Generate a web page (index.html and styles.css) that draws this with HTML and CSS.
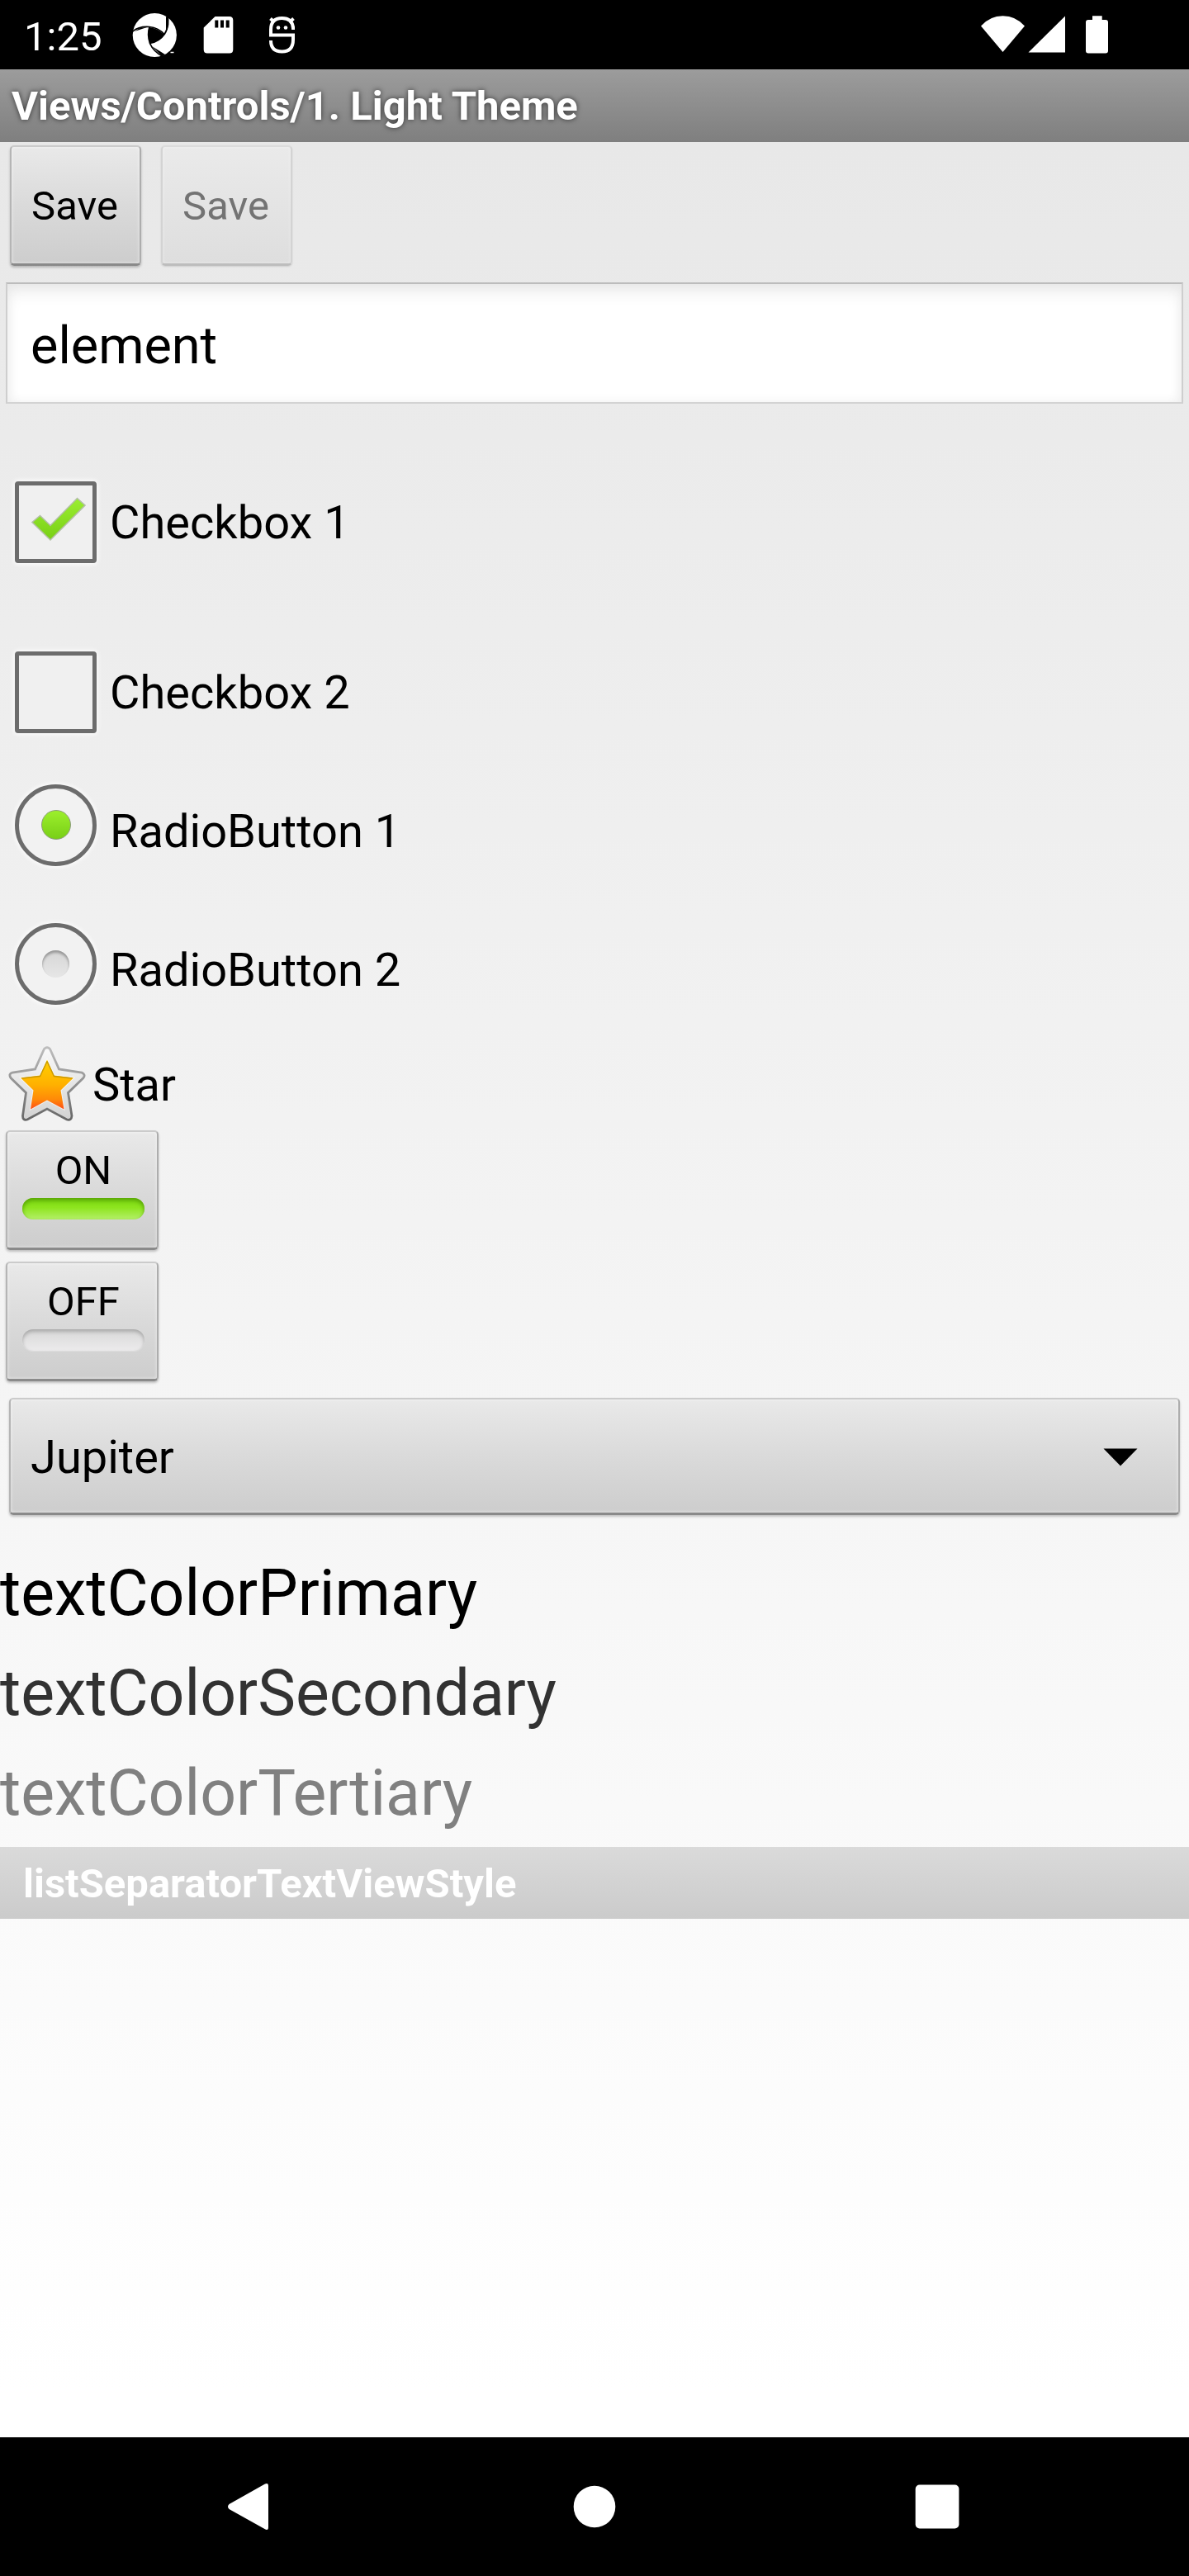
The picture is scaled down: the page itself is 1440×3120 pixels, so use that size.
FILE: index.html
```html
<!DOCTYPE html>
<html lang="en">
<head>
<meta charset="utf-8">
<title>Views/Controls/1. Light Theme</title>
<link rel="stylesheet" href="styles.css">
</head>
<body>
<div class="screen">
  <header class="status">
    <span class="clock">1:25</span>
    <svg class="status-left" width="200" height="84" viewBox="160 0 200 84">
      <circle cx="187.3" cy="42.5" r="26.6" fill="#fff"/>
      <path d="M180.500 33 Q191 34 199 42 Q193 50 181.500 52.500 Q178.500 42 180.500 33Z" fill="#000"/>
      <g fill="none" stroke="#000" stroke-width="1.700">
        <path d="M160 38.500 Q168 31.500 181 32.500 Q192 33.500 199.500 42"/>
        <path d="M202.500 18 Q206 30 199.500 41 Q193 50.500 181.500 52.500"/>
        <path d="M198 69 Q186 63 181.500 52.500 Q178 42 181 32.500"/>
      </g>
      <path d="M201 20 L203.500 21 L204 31 L201 40Z M163 38 L178 33 L170 33.500Z M184 56 L196 68 L200 66Z" fill="#000"/>
      <path d="M206.500 63.500h4" stroke="#fff" stroke-width="1.500"/>
      <path fill="#fff" fill-rule="evenodd" d="M260.500 20H278Q282.300 20 282.300 24.500V60Q282.300 64.500 278 64.500H251Q246.700 64.500 246.700 60V33.500ZM260.300 24.500V33.500H264.300V24.500ZM267 24.500V33.500H271V24.500ZM273.700 24.500V33.500H277.700V24.500Z"/>
      <g fill="none" stroke="#fff" stroke-width="4">
        <path d="M357 34H355Q354 22 341.500 22Q328 22 328 36V42.500H355V48Q355 62.500 341.500 62.500Q328 62.500 328 49"/>
        <path d="M327.500 22.500L332.500 27M355.500 22.500L350.500 27"/>
      </g>
      <circle cx="337" cy="33.500" r="2.300" fill="#fff"/><circle cx="346" cy="33.500" r="2.300" fill="#fff"/>
    </svg>
    <svg class="status-right" width="160" height="84" viewBox="1185 0 160 84" fill="#fff">
      <path d="M1188 31.500Q1199 19.300 1214.500 19.300T1241 31.500L1214.500 63Z"/>
      <path d="M1290 19.500V63.500H1245.500Z"/>
      <path d="M1323 19.300H1334.700V24H1339Q1342 24 1342 27V61.500Q1342 64.500 1339 64.500H1318Q1315 64.500 1315 61.500V27Q1315 24 1318 24H1323Z"/>
    </svg>
  </header>
  <div class="titlebar">Views/Controls/1. Light Theme</div>
  <main class="content">
    <div class="buttons">
      <button class="btn save">Save</button>
      <button class="btn save disabled">Save</button>
    </div>
    <div class="edit">element</div>
    <div class="row check">
      <span class="box"><svg width="89" height="89" viewBox="0 0 89 89">
        <defs><linearGradient id="tick" x1="0" y1="0" x2="0" y2="1"><stop offset="0" stop-color="#9bee31"/><stop offset="1" stop-color="#79cf15"/></linearGradient></defs>
        <path d="M16 44.500L25.500 36.500L38 48.500L70.500 15.500L80 24L38 66Z" fill="url(#tick)" stroke="#b3bfa6" stroke-width="1.600"/>
      </svg></span>
      <span>Checkbox 1</span>
    </div>
    <div class="row check second"><span class="box"></span><span>Checkbox 2</span></div>
    <div class="row radio"><span class="ring"><span class="dot on"></span></span><span>RadioButton 1</span></div>
    <div class="row radio"><span class="ring"><span class="dot"></span></span><span>RadioButton 2</span></div>
    <div class="row star">
      <svg width="96" height="96" viewBox="9 1265.500 96 96">
        <defs>
          <linearGradient id="rim" x1="0" y1="0" x2="0" y2="1"><stop offset="0" stop-color="#bdbdbd"/><stop offset="1" stop-color="#666"/></linearGradient>
          <linearGradient id="metal" x1="0" y1="0" x2="0" y2="1"><stop offset="0" stop-color="#fafafa"/><stop offset="1" stop-color="#d2d2d2"/></linearGradient>
          <linearGradient id="gold" x1="0" y1="0" x2="0" y2="1"><stop offset="0" stop-color="#ffd000"/><stop offset=".5" stop-color="#ffb100"/><stop offset=".8" stop-color="#ff8a08"/><stop offset="1" stop-color="#ff4d18"/></linearGradient>
        </defs>
        <path d="M53.500 1270Q57 1266.500 60.500 1270L71.500 1294.500L99 1298.500Q104 1301 101 1305L82.500 1323L87 1351Q86.500 1357 81 1355.500L57 1342.500L33 1355.500Q27.500 1357 27.500 1351L31.500 1323L13 1305Q10 1300 15 1298.500L42.500 1294.500Z" fill="url(#metal)" stroke="url(#rim)" stroke-width="2.800"/>
        <path d="M57 1283L65.500 1302L89 1305L73.500 1320L77.500 1343L57 1332L37 1343L40.500 1320L25 1305L48.500 1302Z" fill="url(#gold)" stroke="#fff" stroke-opacity=".55" stroke-width="2" paint-order="stroke"/>
        <path d="M57 1285L48.500 1303L26.500 1305.500M57 1285L65.500 1303L87.500 1305.500" fill="none" stroke="#b88b00" stroke-width="1.500" opacity=".75"/>
      </svg>
      <span>Star</span>
    </div>
    <button class="btn toggle"><span>ON</span><span class="led lit"></span></button>
    <button class="btn toggle"><span>OFF</span><span class="led"></span></button>
    <div class="btn spinner"><span>Jupiter</span>
      <svg width="44" height="24" viewBox="0 0 44 24"><path d="M1.500 1.500H42.500L22 22.500Z"/></svg>
    </div>
    <p class="sample primary">textColorPrimary</p>
    <p class="sample secondary">textColorSecondary</p>
    <p class="sample tertiary">textColorTertiary</p>
    <div class="separator">listSeparatorTextViewStyle</div>
  </main>
  <nav class="navbar">
    <svg width="1440" height="168" viewBox="0 2952 1440 168" fill="#fff">
      <path d="M277.500 3033L320.500 3008.800Q325 3006.500 325 3011V3061Q325 3065.500 320.500 3063L277.500 3039Q274.500 3036 277.500 3033Z"/>
      <circle cx="720" cy="3036" r="25.300"/>
      <rect x="1108.700" y="3009.500" width="52.700" height="53" rx="5"/>
    </svg>
  </nav>
</div>
</body>
</html>
```
FILE: styles.css
```css
* { box-sizing: border-box; }
body { margin: 0; font-family: Roboto, "Liberation Sans", sans-serif; color: #000; }
.screen { width: 1440px; height: 3120px; display: flex; flex-direction: column; overflow: hidden; }

.status { flex: none; height: 84px; display: flex; align-items: center; background: #000; color: #fff; padding: 0 95px 0 29px; font-size: 49px; }
.clock { width: 131px; padding-top: 5px; line-height: 58px; }
.status-right { margin-left: auto; }
.titlebar { flex: none; height: 88px; padding-left: 14px; line-height: 90px; font-size: 49px; font-weight: 700; color: #fff; background: linear-gradient(#9c9c9c, #7f7f7f); text-shadow: 0 0 6px rgba(0, 0, 0, .65); white-space: nowrap; }

.content { flex: 1; display: flex; flex-direction: column; align-items: flex-start; background: linear-gradient(#e8e8e8, #fff 98%); font-size: 56px; }
.btn { border: 2px solid; border-color: #cbcbcb #adadad #8a8a8a #b5b5b5; border-bottom-width: 3px; border-radius: 5px; padding: 0; font: inherit; font-size: 49px; color: #000; background: linear-gradient(#e9e9e9, #dadada 50%, #cdcdcd); box-shadow: 0 2px 3px rgba(0, 0, 0, .22), inset 0 0 4px rgba(255, 255, 255, .6); }
.buttons { height: 170px; padding: 4px 0 0 12px; display: flex; gap: 24px; }
.save { width: 159px; height: 146px; padding-right: 2px; line-height: 143px; }
.disabled { color: #737373; border-color: #dcdcdc #d3d3d3 #bdbdbd #d3d3d3; background: linear-gradient(#eaeaea, #dedede); box-shadow: 0 1px 2px rgba(0, 0, 0, .12), inset 0 0 4px rgba(255, 255, 255, .4); }

.edit { width: 1426px; height: 147px; margin-left: 7px; padding-left: 28px; line-height: 150px; font-size: 63px; background: #fff; border: 2px solid; border-color: #bcbcbc #cecece #d3d3d3; box-shadow: inset 0 12px 22px -6px #e4e4e4, inset 0 0 14px #f1f1f1; }

.row { display: flex; align-items: center; }
.check { margin: 94px 0 0 18px; height: 99px; gap: 16px; }
.check.second { margin-top: 107px; }
.box { width: 99px; height: 99px; border: 5px solid #6c6c6c; border-radius: 4px; background: #f0f0f0; box-shadow: 0 0 5px 2px rgba(255, 255, 255, .75); }
.box svg { display: block; }
.radio { height: 168px; margin-left: 18px; gap: 16px; }
.check.second + .radio { margin-top: 35px; }
.ring { width: 99px; height: 99px; margin-bottom: 16px; border: 5px solid #6c6c6c; border-radius: 50%; background: #f2f2f2; box-shadow: 0 0 5px 2px rgba(255, 255, 255, .75); display: grid; place-items: center; }
.dot { width: 33px; height: 33px; border-radius: 50%; background: linear-gradient(#d6d6d6, #e6e6e6); box-shadow: inset 0 3px 3px #989898; }
.dot.on { width: 36px; height: 36px; border: 1px solid #8b9c79; background: linear-gradient(#9cef2c, #79cf17); box-shadow: none; }
.star { height: 110px; margin-left: 9px; gap: 7px; }

.toggle { width: 185px; height: 145px; margin: 0 0 14px 7px; display: flex; flex-direction: column; align-items: center; padding-top: 17px; padding-left: 3px; line-height: 60px; }
.led { width: 148px; height: 26px; margin-top: 3px; border-radius: 13px; background: linear-gradient(#d8d8d8, #ecebec); box-shadow: inset 0 3px 4px #aaa, 0 1px 1px #dedede; }
.led.lit { background: linear-gradient(#7ad80f, #8ee51f 45%, #b4f069); box-shadow: inset 0 3px 5px #58a307; }
.spinner { width: 1418px; height: 142px; margin: 6px 0 0 11px; padding: 2px 48px 0 24px; display: flex; align-items: center; justify-content: space-between; font-size: 56px; }

.sample { margin: 0; height: 121px; line-height: 121px; font-size: 77px; }
.primary { margin-top: 35px; }
.secondary { color: #323232; }
.tertiary { color: #808080; }
.separator { width: 100%; height: 87px; margin-top: 4px; padding-left: 28px; line-height: 90px; font-size: 49px; font-weight: 700; color: #fff; background: linear-gradient(#dadada, #cbcbcb); }
.navbar { flex: none; height: 168px; background: #000; }
.navbar svg { display: block; }
```
